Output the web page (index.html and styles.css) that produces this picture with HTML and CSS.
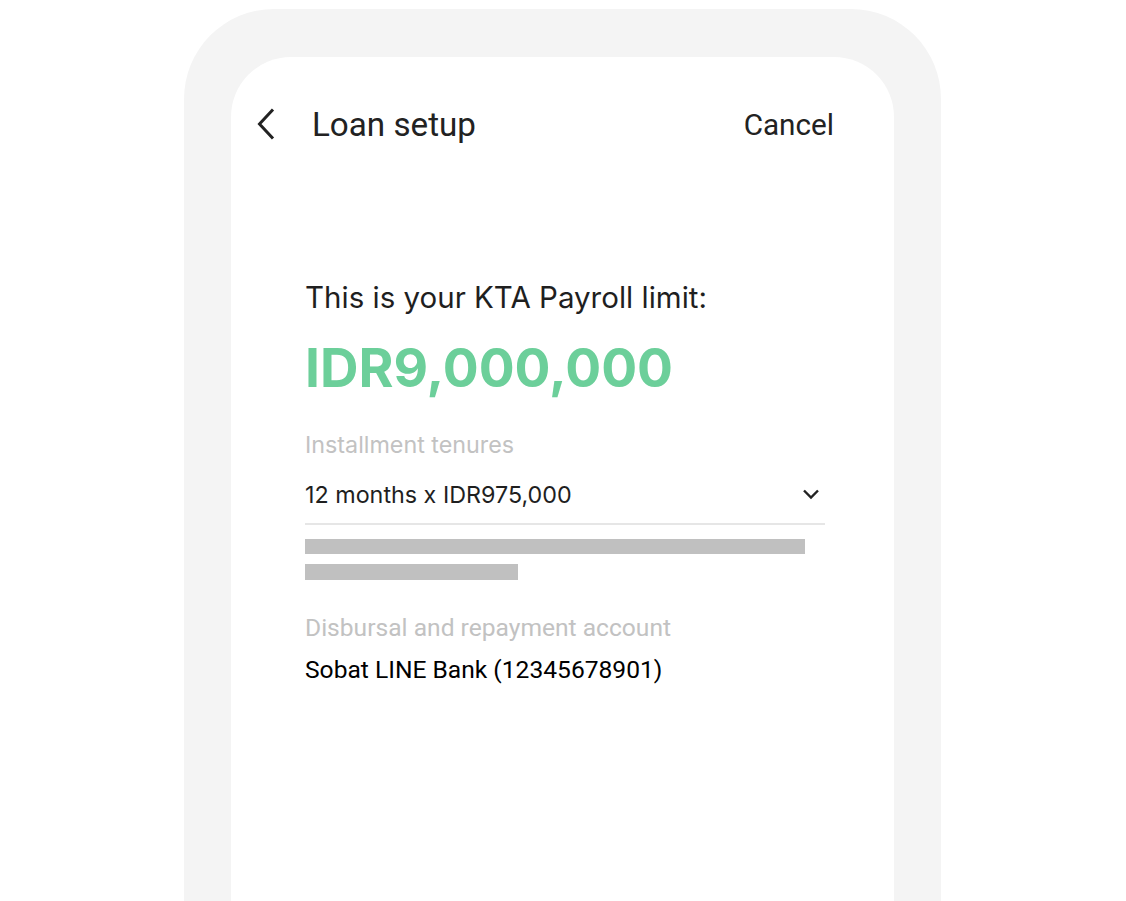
FILE: index.html
```html
<!DOCTYPE html>
<html lang="en">
<head>
<meta charset="utf-8">
<title>Loan setup</title>
<link rel="stylesheet" href="styles.css">
</head>
<body>
<div class="stage">
  <div class="phone">
    <div class="screen">
      <header class="topbar">
        <button class="back" aria-label="Back">
          <svg width="20" height="32" viewBox="0 0 20 32"><path d="M17 1.5 L3.5 16 L17 30.5" fill="none" stroke="#222" stroke-width="3" stroke-linecap="butt" stroke-linejoin="miter"/></svg>
        </button>
        <h1 class="title">Loan setup</h1>
        <span class="cancel">Cancel</span>
      </header>
      <main class="content">
        <p class="intro">This is your KTA Payroll limit:</p>
        <p class="amount">IDR9,000,000</p>
        <div class="field">
          <div class="label">Installment tenures</div>
          <div class="select">
            <span>12 months x IDR975,000</span>
            <svg width="18" height="12" viewBox="0 0 18 12"><path d="M2 2.5 L9 9.5 L16 2.5" fill="none" stroke="#222" stroke-width="2.4"/></svg>
          </div>
        </div>
        <div class="skeleton">
          <div class="bar bar-long"></div>
          <div class="bar bar-short"></div>
        </div>
        <div class="field account">
          <div class="label label-roboto">Disbursal and repayment account</div>
          <div class="value">Sobat LINE Bank (12345678901)</div>
        </div>
      </main>
    </div>
  </div>
</div>
</body>
</html>
```
FILE: styles.css
```css
html, body {
  margin: 0;
  padding: 0;
  background: #ffffff;
  height: 901px;
  overflow: hidden;
}
.stage {
  display: flex;
  justify-content: center;
  padding-top: 9px;
  padding-right: 1px;
}
.phone {
  width: 757px;
  height: 892px;
  box-sizing: border-box;
  padding: 48px 47px 0 47px;
  background: #f4f4f4;
  border-radius: 90px 90px 0 0;
}
.screen {
  background: #ffffff;
  height: 100%;
  border-radius: 60px 60px 0 0;
  display: flex;
  flex-direction: column;
}
.topbar {
  display: flex;
  align-items: center;
  height: 42px;
  margin-top: 46px;
  padding: 0 60px 0 25px;
  font-family: Roboto, "Liberation Sans", sans-serif;
  color: #222222;
}
.back {
  border: 0;
  background: none;
  padding: 0;
  width: 20px;
  height: 32px;
  display: flex;
  margin-right: 36px;
}
.title {
  margin: 0;
  font-size: 33.2px;
  font-weight: 400;
  flex: 1;
}
.cancel {
  font-size: 29.7px;
}
.content {
  padding: 0 69px 0 74px;
  font-family: Inter, "Noto Sans", sans-serif;
}
.intro {
  margin: 134px 0 0 0;
  font-size: 29.5px;
  line-height: 36px;
  color: #1f1f1f;
}
.amount {
  margin: 23px 0 0 0;
  font-size: 53.3px;
  line-height: 60px;
  font-weight: 700;
  color: #6ccf9a;
}
.field {
  margin-top: 33px;
}
.label {
  font-size: 23.3px;
  line-height: 28px;
  color: #c2c2c2;
}
.select {
  display: flex;
  align-items: center;
  justify-content: space-between;
  height: 58px;
  padding: 6px 5px 0 0;
  border-bottom: 2px solid #e6e6e6;
  font-size: 23.3px;
  color: #1f1f1f;
}
.skeleton {
  display: flex;
  flex-direction: column;
  gap: 10px;
  margin-top: 14px;
}
.bar {
  height: 15px;
  background: #c0c0c0;
}
.bar-long { width: 500px; }
.bar-short { width: 213px; height: 16px; }
.account {
  margin-top: 34px;
}
.label-roboto {
  font-family: Roboto, "Liberation Sans", sans-serif;
  font-size: 24.6px;
}
.value {
  margin-top: 13px;
  font-family: Roboto, "Liberation Sans", sans-serif;
  font-size: 24.6px;
  line-height: 30px;
  color: #000000;
}
```
